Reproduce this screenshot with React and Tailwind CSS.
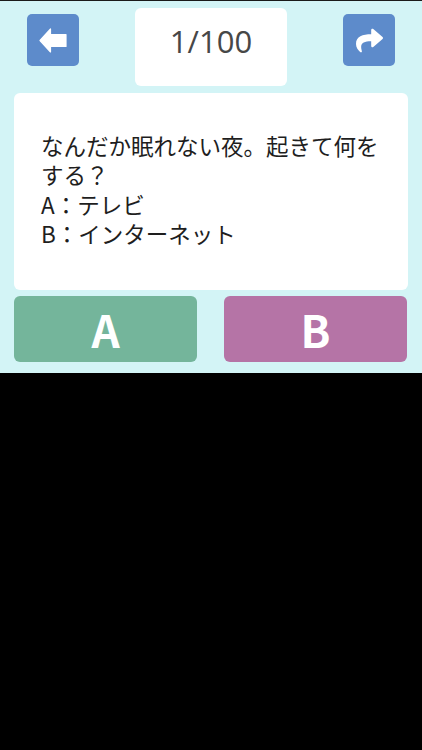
import React from 'react';
import { FaShare } from 'react-icons/fa';

const BackArrow = () => (
  <svg width="28" height="25" viewBox="0 0 28 25" fill="white">
    <path d="M1 12.5 L11.5 1 L11.5 6.5 L27 6.5 L27 18.5 L11.5 18.5 L11.5 24 Z" stroke="white" strokeWidth="1.2" strokeLinejoin="round" />
  </svg>
);

const App = () => {
  const question = {
    index: 1,
    total: 100,
    text: 'なんだか眠れない夜。起きて何をする？',
    a: 'テレビ',
    b: 'インターネット'
  };

  return (
    <div className="w-[422px] h-[750px] bg-black flex flex-col">
      <div className="h-[1px] bg-[#1a1a1a]" />
      <div className="bg-[#d3f4f6] pb-[11px]">
        {/* Header */}
        <div className="flex justify-between items-start px-[27px] pt-[7px]">
          <button className="mt-[6px] w-[52px] h-[52px] rounded-[5px] bg-[#5d8bcb] flex items-center justify-center">
            <BackArrow />
          </button>
          <div className="w-[152px] h-[78px] bg-white rounded-[6px] flex justify-center pt-[15px]">
            <span className="text-[31px] leading-[36px] text-[#474747] font-['Open_Sans',sans-serif]">
              {question.index}/{question.total}
            </span>
          </div>
          <button className="mt-[6px] w-[52px] h-[52px] rounded-[5px] bg-[#5d8bcb] flex items-center justify-center">
            <FaShare size={27} color="white" className="mt-[1px]" />
          </button>
        </div>

        {/* Question card */}
        <div className="mx-[14px] mt-[7px] h-[197px] bg-white rounded-[6px] flex items-center pl-[27px] pr-[20px] pb-[4px]">
          <p className="text-[22.5px] leading-[29.5px] text-[#1e1e1e] font-['Noto_Sans_CJK_JP',sans-serif]">
            {question.text}
            <br />
            A：{question.a}
            <br />
            B：{question.b}
          </p>
        </div>

        {/* Answer buttons */}
        <div className="grid grid-cols-2 gap-[27px] pl-[14px] pr-[15px] mt-[6px]">
          <button className="h-[66px] rounded-[6px] bg-[#74b59b] text-white text-[44px] font-bold font-['Noto_Sans_CJK_JP',sans-serif] flex items-center justify-center">
            A
          </button>
          <button className="h-[66px] rounded-[6px] bg-[#b574a6] text-white text-[44px] font-bold font-['Noto_Sans_CJK_JP',sans-serif] flex items-center justify-center">
            B
          </button>
        </div>
      </div>
    </div>
  );
};

export default App;
